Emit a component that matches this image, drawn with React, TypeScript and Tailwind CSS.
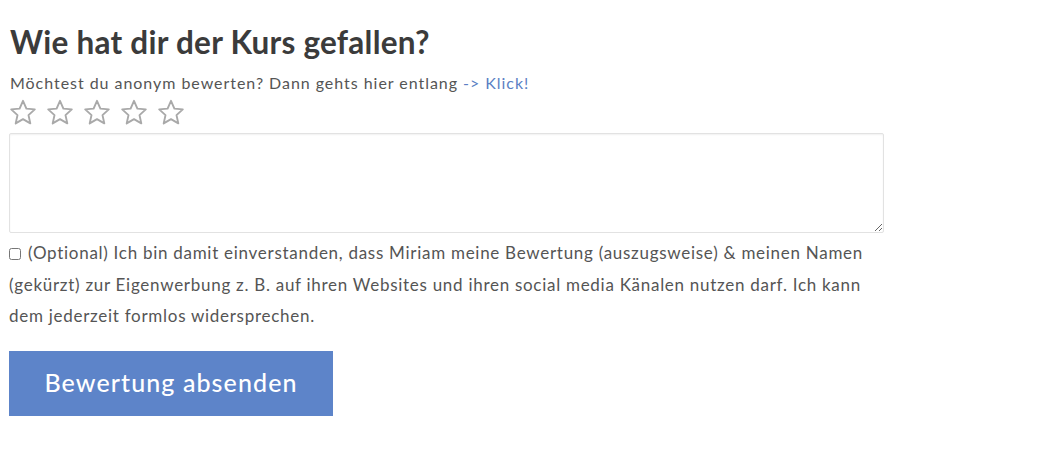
import React from "react";

function Star() {
  return (
    <svg width="28" height="27" viewBox="0 0 28 27" className="shrink-0">
      <path
        d="M14 1.8 L17.4 9.6 L25.8 10.4 L19.5 16.1 L21.3 24.4 L14 20.1 L6.7 24.4 L8.5 16.1 L2.2 10.4 L10.6 9.6 Z"
        fill="none"
        stroke="#a9a9a9"
        strokeWidth="1.9"
        strokeLinejoin="round"
      />
    </svg>
  );
}

export default function App() {
  return (
    <div className="w-[1039px] h-[455px] bg-white pl-[9px] pt-[24px]">
      <h2 className="font-['Lato',sans-serif] font-bold text-[31.5px] leading-[36px] text-[#3b3b3b] pl-[1px] tracking-[0.25px]">
        Wie hat dir der Kurs gefallen?
      </h2>
      <p className="mt-[14px] font-['Lato',sans-serif] text-[16px] leading-[18px] text-[#555] pl-[1px] tracking-[0.96px]">
        Möchtest du anonym bewerten? Dann gehts hier entlang{" "}
        <a className="text-[#5b7fc4]">-&gt; Klick!</a>
      </p>
      <div className="mt-[7px] flex gap-[9px] pl-[0px]">
        <Star />
        <Star />
        <Star />
        <Star />
        <Star />
      </div>
      <textarea className="mt-[7px] block w-[875px] h-[100px] border border-[#e2e2e2] rounded-[2px] shadow-[inset_0_1px_2px_rgba(0,0,0,0.06)] resize-y outline-none" />
      <div className="mt-[4px] w-[900px] font-['Lato',sans-serif] text-[17px] leading-[31.5px] text-[#555] tracking-[0.72px]">
        <input type="checkbox" className="w-[12px] h-[12px] mr-[7px] align-[-1px] accent-[#555]" />
        (Optional) Ich bin damit einverstanden, dass Miriam meine Bewertung (auszugsweise) &amp; meinen Namen
        <br />
        (gekürzt) zur Eigenwerbung z. B. auf ihren Websites und ihren social media Känalen nutzen darf. Ich kann
        <br />
        dem jederzeit formlos widersprechen.
      </div>
      <button className="mt-[19px] w-[324px] h-[65px] bg-[#5d84c9] text-white font-['Lato',sans-serif] text-[25px] font-medium tracking-[1.1px]">
        Bewertung absenden
      </button>
    </div>
  );
}
